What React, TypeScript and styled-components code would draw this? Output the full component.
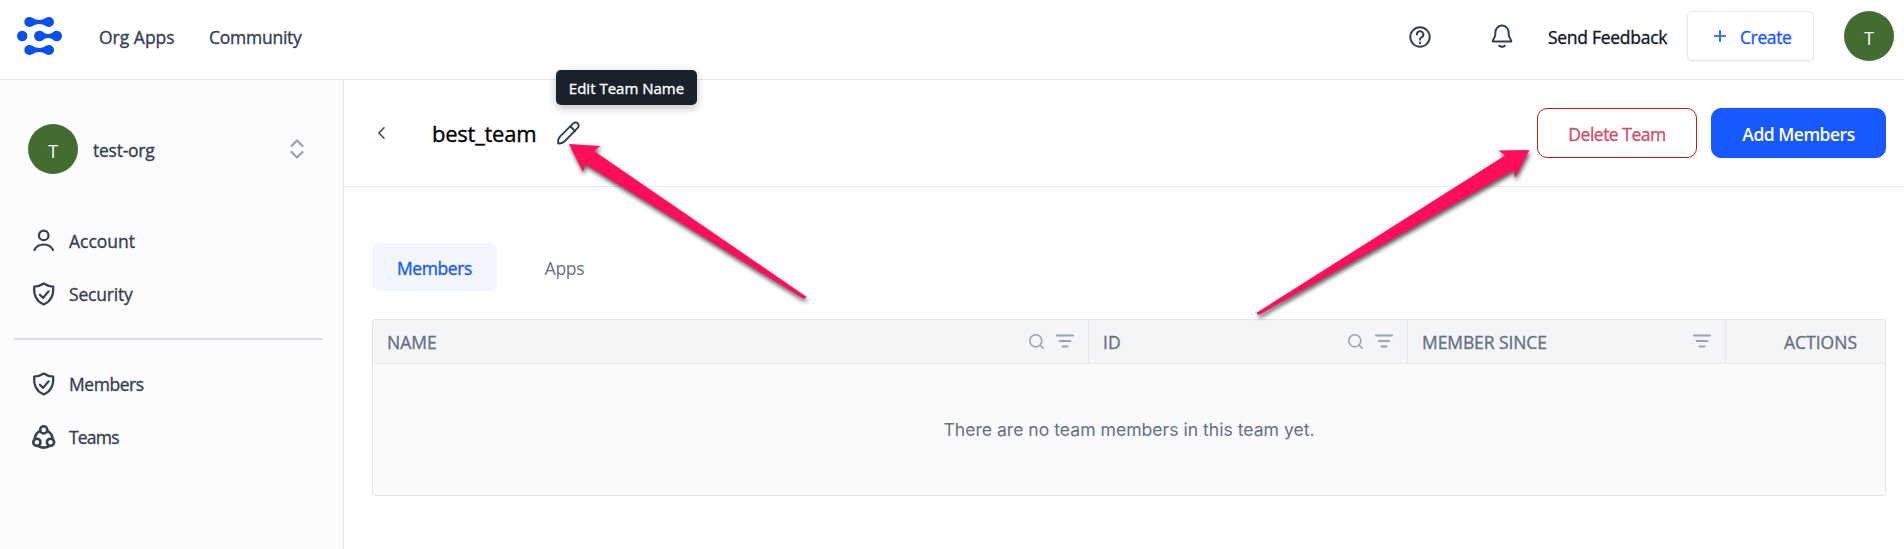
import React from "react";
import styled, { createGlobalStyle } from "styled-components";

const Global = createGlobalStyle`
  * { box-sizing: border-box; }
  html, body { margin: 0; padding: 0; }
  body { background: #fff; font-family: "Open Sans", "Noto Sans", sans-serif; font-size: 18px; overflow: hidden; }
  svg { display: block; flex: none; }
`;

const Page = styled.div`
  display: grid;
  grid-template: 80px 469px / 344px 1fr;
  width: 1904px;
  height: 549px;
`;

const Label = styled.span<{ $size?: number; $track?: number; $weight?: number; $color?: string }>`
  font-size: ${(p) => p.$size ?? 17.5}px;
  letter-spacing: ${(p) => p.$track ?? 0}px;
  font-weight: ${(p) => p.$weight ?? 500};
  -webkit-text-stroke: ${(p) => ((p.$weight ?? 500) === 500 ? 0.35 : 0)}px currentColor;
  color: ${(p) => p.$color ?? "#344054"};
  line-height: 24px;
  white-space: nowrap;
`;

const TopBar = styled.header`
  grid-column: 1 / 3;
  display: flex;
  align-items: flex-start;
  border-bottom: 1px solid #e5e6e9;
  padding: 11px 10px 0 17px;
`;
const LogoBox = styled.div`padding-top: 6px; width: 82px;`;
const NavLink = styled.a<{ $width: number }>`
  display: flex;
  width: ${(p) => p.$width}px;
  padding-top: 14px;
`;
const Spacer = styled.div`flex: 1;`;
const IconSlot = styled.div<{ $width: number; $top: number }>`
  width: ${(p) => p.$width}px;
  padding-top: ${(p) => p.$top}px;
`;
const CreateButton = styled.button`
  display: flex;
  align-items: center;
  gap: 14px;
  width: 127px;
  height: 50px;
  margin-right: 30px;
  padding: 0 0 0 26px;
  border: 1px solid #e4e6ee;
  border-radius: 5px;
  background: #fff;
  box-shadow: 0 1px 2px rgba(16, 24, 40, 0.05);
  font-family: inherit;
`;
const CreateText = styled(Label)`padding-top: 2px;`;
const Avatar = styled.div`
  display: flex;
  align-items: center;
  justify-content: center;
  width: 50px;
  height: 50px;
  padding-top: 3px;
  border-radius: 50%;
  background: #446c30;
`;

const Sidebar = styled.aside`
  background: #fcfcfc;
  border-right: 1px solid #e5e6e9;
  padding-top: 44px;
`;
const OrgSwitcher = styled.div`
  display: flex;
  align-items: center;
  gap: 15px;
  height: 50px;
  padding: 0 39px 0 28px;
  margin-bottom: 40px;
`;
const OrgName = styled(Label)`padding-top: 1px;`;
const SideItem = styled.a`
  display: flex;
  align-items: center;
  gap: 13px;
  height: 53px;
  padding-left: 32px;
`;
const SideDivider = styled.hr`
  height: 2px;
  margin: 18px 20px 17px 14px;
  border: 0;
  background: #dddde8;
`;

const Main = styled.main`background: #fff;`;
const TeamBar = styled.div`
  display: flex;
  align-items: flex-start;
  height: 107px;
  padding: 28px 18px 0 34px;
  border-bottom: 1px solid #ebecee;
`;
const BackButton = styled.div`width: 54px; padding-top: 19px;`;
const TitleSlot = styled.div`display: flex; width: 124px; padding-top: 13px;`;
const EditAnchor = styled.div`position: relative; padding-top: 13px;`;
const Tooltip = styled.div`
  position: absolute;
  top: -38px;
  left: 0;
  display: flex;
  align-items: center;
  justify-content: center;
  width: 141px;
  height: 35px;
  border-radius: 5px;
  background: #19212a;
  box-shadow: 0 3px 8px rgba(0, 0, 0, 0.25);
`;
const Button = styled.button<{ $primary?: boolean }>`
  width: ${(p) => (p.$primary ? 175 : 160)}px;
  height: 50px;
  margin-left: ${(p) => (p.$primary ? 14 : 0)}px;
  padding: 2px 0 0;
  border: 1px solid ${(p) => (p.$primary ? "#1759ff" : "#b42318")};
  border-radius: 10px;
  background: ${(p) => (p.$primary ? "#1759ff" : "#fff")};
  font-family: inherit;
`;

const Tabs = styled.div`display: flex; padding: 56px 0 0 28px;`;
const Tab = styled.div<{ $active?: boolean }>`
  display: flex;
  align-items: center;
  justify-content: center;
  width: 125px;
  height: 48px;
  padding-top: 2px;
  margin-right: 5px;
  border-radius: 8px;
  background: ${(p) => (p.$active ? "#f1f6ff" : "transparent")};
`;

const Table = styled.section`
  width: 1514px;
  height: 177px;
  margin: 28px 0 0 28px;
  border: 1px solid #e2e4e9;
  border-radius: 3px;
  background: #fafafa;
  overflow: hidden;
`;
const HeadRow = styled.div`
  display: grid;
  grid-template-columns: 716px 319px 318px 1fr;
  height: 44px;
  background: #f4f5f7;
  border-bottom: 1px solid #e8eaed;
`;
const HeadCell = styled.div<{ $last?: boolean }>`
  display: flex;
  align-items: center;
  justify-content: ${(p) => (p.$last ? "flex-end" : "space-between")};
  padding: 0 ${(p) => (p.$last ? 28 : 14)}px 0 14px;
  border-right: ${(p) => (p.$last ? 0 : 1)}px solid #e2e4e9;
`;
const HeadText = styled(Label)`padding-top: 1px;`;
const HeadIcons = styled.div`display: flex; gap: 12px; padding-bottom: 1px;`;
const EmptyState = styled.div`
  height: 131px;
  padding-top: 54px;
  text-align: center;
  font-family: Inter, sans-serif;
`;

const Annotations = styled.svg`
  position: absolute;
  top: 0;
  left: 0;
  pointer-events: none;
  filter: drop-shadow(1px 3px 2px rgba(0, 0, 0, 0.65));
`;

const Logo = () => (
  <svg width="45" height="38" viewBox="0 0 45 38" fill="#0450f2">
    <path d="M12.3 0C16.5 0 16.5 3 22.2 3S28 0 32 0a5 5 0 0 1 0 10C28 10 28 7 22.2 7S16.5 10 12.3 10a5 5 0 0 1 0-10Z" />
    <circle cx="5.2" cy="19" r="5.2" />
    <path d="M22.3 13.8C27 13.8 26 17 31 17S36 13.8 39.8 13.8a5.2 5.2 0 0 1 0 10.4C36 24.200 36 21 31 21S27 24.200 22.300 24.200a5.200 5.200 0 0 1 0-10.400Z" />
    <path d="M12.3 28C16.500 28 16.500 31 22.200 31S28 28 32 28a5 5 0 0 1 0 10C28 38 28 35 22.200 35S16.500 38 12.300 38a5 5 0 0 1 0-10Z" />
  </svg>
);
const Stroke = ({ size = 24, box = "0 0 24 24", color = "#344054", width = 2, height, children }: {
  size?: number; box?: string; color?: string; width?: number; height?: number; children: React.ReactNode;
}) => (
  <svg width={size} height={height ?? size} viewBox={box} fill="none" stroke={color} strokeWidth={width} strokeLinecap="round" strokeLinejoin="round">
    {children}
  </svg>
);
const HelpIcon = () => (
  <Stroke size={22} box="0 0 22 22">
    <circle cx="11" cy="11" r="9.700" />
    <path d="M7.900 8.500a3.200 3.200 0 1 1 4.700 2.700c-1.100.6-1.600 1.300-1.600 2.600" />
    <path d="M11 16.900v.1" strokeWidth="2.400" />
  </Stroke>
);
const BellIcon = () => (
  <Stroke size={22} height={24} box="0 0 22 24">
    <path d="M4.300 8.700a6.700 7.200 0 0 1 13.400 0v2.100c0 2.500 2.600 4.600 2.600 6.600H1.700c0-2 2.600-4.100 2.600-6.600Z" />
    <path d="M8.200 21.700c1.400 1.400 4.200 1.400 5.600 0" />
  </Stroke>
);
const UserIcon = () => (
  <Stroke width={2.200}>
    <circle cx="11.700" cy="6.400" r="4.800" />
    <path d="M2.400 21c1.700-3.600 5.300-5.500 9.300-5.500s7.600 1.900 9.300 5.500" />
  </Stroke>
);
const ShieldIcon = () => (
  <Stroke width={2.200}>
    <path d="M11.700 1.500c2.600 1.800 6.200 2.900 9.500 3.100.6 8-1.500 14.400-9.500 17.900C3.700 19 1.600 12.600 2.200 4.600c3.300-.2 6.900-1.300 9.500-3.100Z" />
    <path d="m7.900 12.700 3.200 3.200 5.500-6.600" />
  </Stroke>
);
const TeamsIcon = () => (
  <Stroke width={2.600}>
    <circle cx="11.700" cy="4.900" r="3.600" />
    <circle cx="4.900" cy="17.300" r="3.600" />
    <circle cx="18.500" cy="17.300" r="3.600" />
    <path d="M8.200 5.800C4.400 7.800 2.900 10.500 2.700 14.200M15.200 5.800c3.800 2 5.300 4.700 5.500 8.400M6.200 21.100c3.500 1.900 7.500 1.900 11 0" />
  </Stroke>
);
const PencilIcon = () => (
  <Stroke size={24} width={1.900}>
    <path d="M2.200 22.500c-.4-3 .2-5.300 2-7.100L17.200 2.400a3.100 3.100 0 0 1 4.500 4.500L8.900 20c-1.900 1.900-3.800 2.700-6.700 2.500Z" />
    <path d="m14.500 5.500 4.500 4.500" />
  </Stroke>
);
const SearchIcon = () => (
  <Stroke size={15} box="0 0 15 15" color="#98a2b3" width={1.600}>
    <circle cx="6.800" cy="6.800" r="6" />
    <path d="m11.200 11.200 3 3" />
  </Stroke>
);
const FilterIcon = () => (
  <Stroke size={18} height={14} box="0 0 18 14" color="#98a2b3" width={2}>
    <path d="M1 1.500h16M3.700 7h10.600M6.500 12.500h5" />
  </Stroke>
);

export default function App() {
  return (
    <>
      <Global />
      <Page>
        <TopBar>
          <LogoBox><Logo /></LogoBox>
          <NavLink $width={110}><Label>Org Apps</Label></NavLink>
          <NavLink $width={110}><Label $track={-0.25}>Community</Label></NavLink>
          <Spacer />
          <IconSlot $width={82} $top={15}><HelpIcon /></IconSlot>
          <IconSlot $width={57} $top={13}><BellIcon /></IconSlot>
          <NavLink $width={139}><Label $color="#101828" $track={-0.28}>Send Feedback</Label></NavLink>
          <CreateButton>
            <Stroke size={12} box="0 0 12 12" color="#1759ff" width={1.700}><path d="M6 .5v11M.5 6h11" /></Stroke>
            <CreateText $color="#1759ff" $track={-0.4}>Create</CreateText>
          </CreateButton>
          <Avatar><Label $color="#fff" $weight={400}>T</Label></Avatar>
        </TopBar>

        <Sidebar>
          <OrgSwitcher>
            <Avatar><Label $color="#fff" $weight={400}>T</Label></Avatar>
            <OrgName $track={-0.25}>test-org</OrgName>
            <Spacer />
            <Stroke size={14} height={20} box="0 0 14 20" color="#98a2b3" width={2.300}>
              <path d="m1.500 7 5.500-5.500L12.500 7M1.500 13l5.500 5.500 5.500-5.500" />
            </Stroke>
          </OrgSwitcher>
          <SideItem><UserIcon /><Label>Account</Label></SideItem>
          <SideItem><ShieldIcon /><Label $track={-0.2}>Security</Label></SideItem>
          <SideDivider />
          <SideItem><ShieldIcon /><Label $track={-0.45}>Members</Label></SideItem>
          <SideItem><TeamsIcon /><Label $track={-0.8}>Teams</Label></SideItem>
        </Sidebar>

        <Main>
          <TeamBar>
            <BackButton>
              <Stroke size={7} height={12} box="0 0 7 12" width={1.500}><path d="M6 .8.900 6 6 11.200" /></Stroke>
            </BackButton>
            <TitleSlot><Label $size={22} $color="#000" $track={-0.25}>best_team</Label></TitleSlot>
            <EditAnchor>
              <PencilIcon />
              <Tooltip><Label $size={15} $color="#fff">Edit Team Name</Label></Tooltip>
            </EditAnchor>
            <Spacer />
            <Button><Label $color="#cf4f69" $track={-0.5}>Delete Team</Label></Button>
            <Button $primary><Label $color="#fff" $weight={600} $track={-0.5}>Add Members</Label></Button>
          </TeamBar>
          <Tabs>
            <Tab $active><Label $color="#1759ff" $track={-0.4}>Members</Label></Tab>
            <Tab><Label $color="#667085" $weight={400} $track={-0.3}>Apps</Label></Tab>
          </Tabs>
          <Table>
            <HeadRow>
              <HeadCell><HeadText $color="#667085">NAME</HeadText><HeadIcons><SearchIcon /><FilterIcon /></HeadIcons></HeadCell>
              <HeadCell><HeadText $color="#667085">ID</HeadText><HeadIcons><SearchIcon /><FilterIcon /></HeadIcons></HeadCell>
              <HeadCell><HeadText $color="#667085" $track={-0.1}>MEMBER SINCE</HeadText><HeadIcons><FilterIcon /></HeadIcons></HeadCell>
              <HeadCell $last><HeadText $color="#667085">ACTIONS</HeadText></HeadCell>
            </HeadRow>
            <EmptyState><Label $size={17.600} $weight={400} $color="#667085">There are no team members in this team yet.</Label></EmptyState>
          </Table>
        </Main>
      </Page>
      <Annotations width="1904" height="549" viewBox="0 0 1904 549" fill="#ff0f5b">
        <path d="M569 144 600.500 146 594 151 806 296.500Q806.500 299 803 298.500L585 164 583 172Z" />
        <path d="M1529.500 150 1498.500 150.500 1505 155.500 1257 312.500Q1256.500 315.500 1260 314.500L1514 170 1515 178Z" />
      </Annotations>
    </>
  );
}
